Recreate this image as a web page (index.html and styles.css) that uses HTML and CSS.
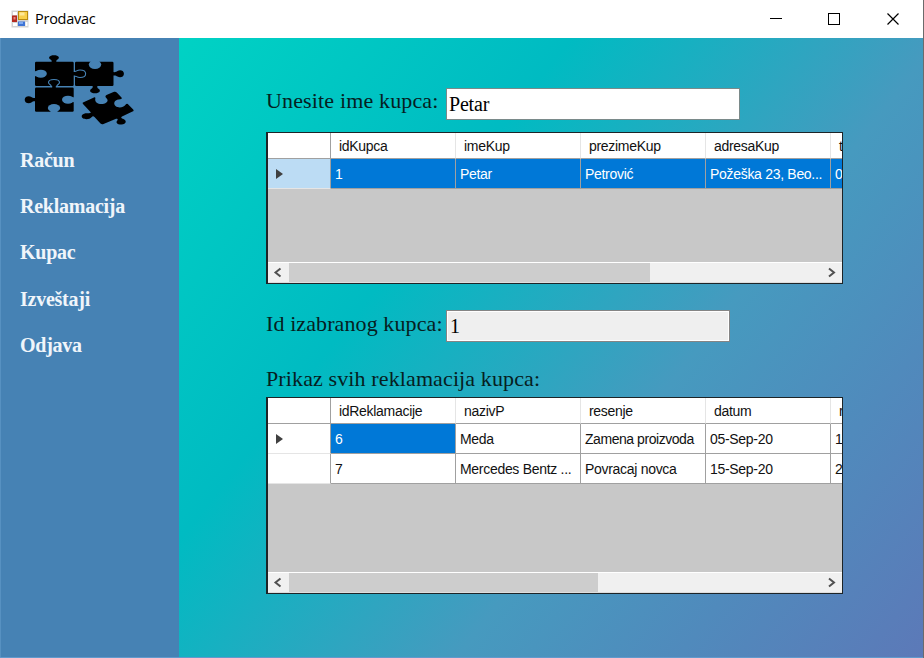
FILE: index.html
```
<!DOCTYPE html>
<html lang="sr-Latn">
<head>
<meta charset="utf-8">
<title>Prodavac</title>
<link rel="stylesheet" href="styles.css">
</head>
<body>
<div class="window">
  <header class="titlebar">
    <svg class="app-icon" width="18" height="18" viewBox="0 0 18 18">
      <rect x="0.5" y="0.5" width="17" height="17" fill="#d3d3d3"/>
      <rect x="2" y="2" width="4" height="3" fill="#fff"/><rect x="2" y="13" width="4" height="3" fill="#fff"/>
      <rect x="14.5" y="12" width="2" height="4" fill="#fff"/>
      <rect x="7.5" y="1.5" width="9" height="8" fill="#f8cf4b" stroke="#b98a10"/>
      <rect x="8.5" y="2.5" width="5" height="3" fill="#fde79a"/>
      <rect x="1" y="5.500" width="5" height="6.500" fill="#b52a20"/><rect x="2.500" y="7" width="2" height="2.500" fill="#e9867c"/>
      <rect x="7" y="11.500" width="7" height="4.500" fill="#3e74d6"/><rect x="8" y="12" width="4" height="2" fill="#7eaaf0"/>
    </svg>
    <span class="title">Prodavac</span>
    <svg class="controls" width="130" height="14" viewBox="0 0 130 14" fill="none" stroke="#000" shape-rendering="crispEdges">
      <path d="M0 6.500H12M58.500 1.500h11v11h-11z"/>
      <path d="M117.500 1.500l11 11M128.500 1.500l-11 11" shape-rendering="auto" stroke-width="1.200"/>
    </svg>
  </header>
  <div class="body">
    <nav class="sidebar">
      <svg class="logo" width="112" height="72" viewBox="24 54 112 72">
        <defs>
          <path id="knob" d="M-2.600 1C-1.600-1-2-2-3.500-3C-5.400-4.500-4.500-7.300 0-7.300S5.400-4.500 3.500-3C2-2 1.600-1 2.600 1Z"/>
        </defs>
        <rect x="35" y="61.700" width="38.700" height="24.300" rx="1.200"/>
        <rect x="75" y="61.700" width="38.500" height="24.300" rx="1.200"/>
        <rect x="35" y="87.500" width="38.700" height="24.200" rx="1.200"/>
        <use href="#knob" transform="translate(54 62) scale(1.100 .93)"/>
        <use href="#knob" transform="translate(113 73.800) rotate(90) scale(.8 1.500)"/>
        <use href="#knob" transform="translate(95 86) rotate(180) scale(1.100 1)"/>
        <use href="#knob" transform="translate(36 99.700) rotate(-90) scale(.8 1.550)"/>
        <g fill="#4682b4">
          <ellipse cx="40.800" cy="73.700" rx="6" ry="4"/><rect x="34" y="71.200" width="4" height="5"/>
          <ellipse cx="95" cy="64.600" rx="6.200" ry="4.500"/><rect x="91.200" y="61" width="7.600" height="3"/>
          <ellipse cx="68" cy="99.700" rx="6" ry="4"/><rect x="70" y="97.300" width="4" height="4.800"/>
          <ellipse cx="54" cy="108" rx="6.200" ry="4"/><rect x="50.500" y="109" width="7" height="3"/>
        </g>
        <g stroke="#4682b4" fill="none" stroke-width="1.100">
          <path d="M74 71.300C77 72 76 70 80 70C87.500 70 87.500 77.500 80 77.500C76 77.500 77 75.500 74 76.200"/>
          <path d="M51 87C52 84 48.500 85 48.500 82.500C48.500 78.500 59.500 78.500 59.500 82.500C59.500 85 56 84 57 87"/>
        </g>
        <path d="M73 73.800h4M54 86v3" stroke="#000" stroke-width="3.600"/>
        <path d="M83 102.500L94.500 97.200C95.500 97 95.500 98 95.200 99.500C95 102 98 104.500 102.500 104C107 103.200 109 100.500 106.500 98.200C105 97 105 95.500 107 94.800L113.500 92C115 91.500 116 91.700 117 92.700L121.500 97.500C122.500 98.700 121.500 99.300 118.500 99.500C114.500 100 113 103.500 115.500 106C118.500 108.500 123.500 107.500 125.300 105C126.500 103.500 127.500 103.500 128.500 104.700L133.200 109.500C134 110.500 133.700 111 132.500 111.600L122 116.500C120.500 117.500 121 118.300 123.500 119C127 120.500 126.500 124.300 121.500 124.500C116.500 124.500 115.500 122 117.500 120.200C118.300 119.200 117 118.500 115.500 119L103.500 124C102.300 124.500 101.500 124.300 100.500 123.500L94.500 117C93.500 116 92.500 116 91.500 117.300C90 119.500 84.500 119.800 82.500 118C80.500 116 82.500 113.300 87 113.300C90.500 113.300 91.500 113 90 111.500L83 104C82.500 103.300 82.500 102.800 83 102.500Z"/>
      </svg>
      <a class="nav-item">Račun</a>
      <a class="nav-item">Reklamacija</a>
      <a class="nav-item">Kupac</a>
      <a class="nav-item">Izveštaji</a>
      <a class="nav-item">Odjava</a>
    </nav>
    <main class="content">
      <div class="field name-field"><label class="label label-name">Unesite ime kupca:</label><div class="input input-name">Petar</div></div>
      <section class="grid">
        <div class="row head"><div class="stub"></div><div>idKupca</div><div>imeKup</div><div>prezimeKup</div><div>adresaKup</div><div>t</div></div>
        <div class="row selected"><div class="stub current"></div><div>1</div><div>Petar</div><div>Petrović</div><div>Požeška 23, Beo...</div><div>0</div></div>
        <div class="scrollbar">
          <svg width="21" height="20" viewBox="0 0 21 20"><path class="chevron" d="M12.500 5.500L7.500 9.500l5 4"/></svg>
          <div class="thumb thumb-customers"></div>
          <svg class="end" width="21" height="20" viewBox="0 0 21 20"><path class="chevron" d="M8 5.500l5 4l-5 4"/></svg>
        </div>
      </section>
      <div class="field id-field"><label class="label label-id">Id izabranog kupca:</label><div class="input input-id">1</div></div>
      <div class="label label-list">Prikaz svih reklamacija kupca:</div>
      <section class="grid grid-claims">
        <div class="row head"><div class="stub"></div><div>idReklamacije</div><div>nazivP</div><div>resenje</div><div>datum</div><div>r</div></div>
        <div class="row"><div class="stub current"></div><div class="active">6</div><div>Meda</div><div class="fit">Zamena proizvoda</div><div>05-Sep-20</div><div>1</div></div>
        <div class="row"><div class="stub"></div><div>7</div><div>Mercedes Bentz ...</div><div>Povracaj novca</div><div>15-Sep-20</div><div>2</div></div>
        <div class="scrollbar">
          <svg width="21" height="20" viewBox="0 0 21 20"><path class="chevron" d="M12.500 5.500L7.500 9.500l5 4"/></svg>
          <div class="thumb thumb-claims"></div>
          <svg class="end" width="21" height="20" viewBox="0 0 21 20"><path class="chevron" d="M8 5.500l5 4l-5 4"/></svg>
        </div>
      </section>
    </main>
  </div>
</div>
</body>
</html>
```
FILE: styles.css
```
* { box-sizing: border-box; }
body { margin: 0; overflow: hidden; }
.window { width: 924px; height: 658px; display: flex; flex-direction: column; background: #fff; border-right: 1px solid #6b6b6b; }
.titlebar { height: 38px; flex: none; display: flex; align-items: center; padding: 0 23px 0 11px; background: #fff; }
.app-icon { flex: none; }
.title { margin-left: 6px; font: 14.5px/20px "Open Sans", "Noto Sans", sans-serif; color: #000; letter-spacing: -0.25px; }
.controls { margin-left: auto; }
.body { flex: 1; display: flex; min-height: 0; border-bottom: 1px solid #6199cc; }
.sidebar { width: 179px; flex: none; background: #4682b4; border-left: 1px solid #5791c1; padding: 16px 0 0 19px; display: flex; flex-direction: column; }
.logo { margin-left: 4px; margin-bottom: 11px; flex: none; }
.nav-item { height: 46.2px; line-height: 46.2px; font-family: "Liberation Serif", serif; font-weight: bold; font-size: 20px; color: #f0f5fa; letter-spacing: -0.25px; }
.content { flex: 1; min-width: 0; padding: 50px 0 0 87px; background: linear-gradient(128deg, #00d2c4 0%, #00bbc2 32%, #469abf 62%, #508abc 80%, #5c79b8 100%); }
.field { display: flex; }
.label { font-family: "Liberation Serif", serif; font-size: 22px; line-height: 26px; color: #06201f; white-space: nowrap; }
.label-name, .label-id { width: 180px; flex: none; }
.label-name { letter-spacing: 0.15px; }
.label-id { letter-spacing: 0.1px; padding-top: 1px; }
.label-list { margin-top: 24px; height: 31px; letter-spacing: 0.12px; }
.input { width: 294px; height: 32px; border: 1px solid #7a8a8a; background: #fff; padding-left: 2px; font: 20px/30px "Liberation Serif", serif; color: #000; letter-spacing: -0.2px; }
.input-id { width: 284px; background: #efefef; border-color: #858585; box-shadow: inset 0 0 0 1px #fff; padding-left: 3px; }
.id-field { margin-top: 26px; }
.grid { width: 577px; height: 152px; margin-top: 12px; border: 1px solid #1d2427; border-left-width: 2px; background: #c8c8c8; overflow: hidden; display: flex; flex-direction: column; }
.grid-claims { height: 197px; margin-top: 0; }
.row { display: grid; grid-template-columns: 63px repeat(4, 125px) 11px; height: 30px; flex: none; font: 14px/30px "Liberation Sans", sans-serif; letter-spacing: -0.3px; color: #111; }
.row > div { border-right: 1px solid #a0a0a0; border-bottom: 1px solid #a0a0a0; background: #fff; padding-left: 4px; white-space: nowrap; overflow: hidden; }
.row > div:last-child { border-right: 0; }
.row > .stub { border-bottom-color: #e5e5e5; padding: 0; display: flex; align-items: center; }
.row > .fit { letter-spacing: -0.45px; }
.head { height: 26px; line-height: 27px; }
.head > div { border-right-color: #e5e5e5; padding-left: 8px; }
.head > .stub { border-right-color: #a0a0a0; border-bottom-color: #a0a0a0; }
.selected > div, .row > .active { background: #0078d7; color: #fff; }
.selected > .stub { background: #bcdcf4; }
.current::before { content: ""; margin-left: 8px; border-left: 7px solid #404040; border-top: 5.5px solid transparent; border-bottom: 5.5px solid transparent; }
.scrollbar { margin-top: auto; height: 21px; flex: none; display: flex; background: #f0f0f0; border-top: 1px solid #fff; border-bottom: 1px solid #ddd; }
.thumb { background: #cdcdcd; }
.thumb-customers { width: 361px; }
.thumb-claims { width: 309px; }
.end { margin-left: auto; }
.chevron { fill: none; stroke: #505050; stroke-width: 2; }
```
